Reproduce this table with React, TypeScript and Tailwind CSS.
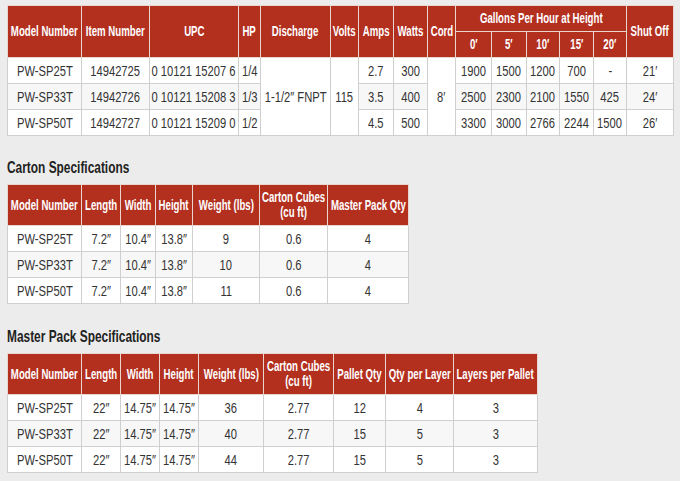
import React from "react";

const RED = "bg-[#b3301f]";
const FONT = { fontFamily: '"Liberation Sans", Arial, sans-serif' };

const thCls = "border border-[#e9d6d1] text-white font-bold text-[14.5px] leading-[15px] text-center align-middle p-0 overflow-visible";
const tdCls = "border border-[#cfcfcf] text-[#333333] text-[14px] leading-[16px] text-center align-middle p-0 whitespace-nowrap overflow-visible";

function H({ children, rowSpan, colSpan }: { children: React.ReactNode; rowSpan?: number; colSpan?: number }) {
  return (
    <th rowSpan={rowSpan} colSpan={colSpan} className={thCls}>
      <div className="flex justify-center">
        <span className="inline-block whitespace-nowrap scale-x-[0.665]">{children}</span>
      </div>
    </th>
  );
}

function D({ children, rowSpan, className = "" }: { children: React.ReactNode; rowSpan?: number; className?: string }) {
  return (
    <td rowSpan={rowSpan} className={`${tdCls} ${className}`}>
      <div className="flex justify-center">
        <span className="inline-block whitespace-nowrap scale-x-[0.8]">{children}</span>
      </div>
    </td>
  );
}

function Title({ children }: { children: React.ReactNode }) {
  return (
    <div className="h-[22px] mb-[5px] text-[17px] leading-[22px] font-bold text-[#222222] whitespace-nowrap" style={FONT}>
      <span className="inline-block origin-left scale-x-[0.7]">{children}</span>
    </div>
  );
}

function Body({ rows }: { rows: string[][] }) {
  return (
    <tbody>
      {rows.map((r, i) => (
        <tr key={i} className={`h-[26px] ${i === 1 ? "bg-[#f7f7f7]" : "bg-white"}`}>
          {r.map((c, j) => (
            <D key={j}>{c}</D>
          ))}
        </tr>
      ))}
    </tbody>
  );
}

function Cols({ widths }: { widths: number[] }) {
  return (
    <colgroup>
      {widths.map((w, i) => (
        <col key={i} style={{ width: w }} />
      ))}
    </colgroup>
  );
}

export default function App() {
  const w1 = [74, 68, 89, 22, 70, 28, 35, 34, 28, 36, 35, 33, 34, 33, 47];
  const w2 = [74, 39, 35, 37, 67, 68, 81];
  const w3 = [74, 39, 39, 39, 65, 70, 52, 68, 84];
  const cubes = (
    <>
      Carton Cubes
      <br />
      (cu ft)
    </>
  );
  return (
    <div className="w-[680px] h-[481px] bg-[#ececec] pl-[7px] pt-[5px]" style={FONT}>
      <table className="table-fixed border-collapse w-[666px]">
        <Cols widths={w1} />
        <thead className={RED}>
          <tr className="h-[26px]">
            <H rowSpan={2}>Model Number</H>
            <H rowSpan={2}>Item Number</H>
            <H rowSpan={2}>UPC</H>
            <H rowSpan={2}>HP</H>
            <H rowSpan={2}>Discharge</H>
            <H rowSpan={2}>Volts</H>
            <H rowSpan={2}>Amps</H>
            <H rowSpan={2}>Watts</H>
            <H rowSpan={2}>Cord</H>
            <H colSpan={5}>Gallons Per Hour at Height</H>
            <H rowSpan={2}>Shut Off</H>
          </tr>
          <tr className="h-[26px]">
            <H>0′</H>
            <H>5′</H>
            <H>10′</H>
            <H>15′</H>
            <H>20′</H>
          </tr>
        </thead>
        <tbody>
          <tr className="h-[26px] bg-white">
            <D>PW-SP25T</D>
            <D>14942725</D>
            <D>0 10121 15207 6</D>
            <D>1/4</D>
            <D rowSpan={3} className="bg-white">1-1/2″ FNPT</D>
            <D rowSpan={3} className="bg-white">115</D>
            <D>2.7</D>
            <D>300</D>
            <D rowSpan={3} className="bg-white">8′</D>
            <D>1900</D>
            <D>1500</D>
            <D>1200</D>
            <D>700</D>
            <D>-</D>
            <D>21′</D>
          </tr>
          <tr className="h-[26px] bg-[#f7f7f7]">
            <D>PW-SP33T</D>
            <D>14942726</D>
            <D>0 10121 15208 3</D>
            <D>1/3</D>
            <D>3.5</D>
            <D>400</D>
            <D>2500</D>
            <D>2300</D>
            <D>2100</D>
            <D>1550</D>
            <D>425</D>
            <D>24′</D>
          </tr>
          <tr className="h-[26px] bg-white">
            <D>PW-SP50T</D>
            <D>14942727</D>
            <D>0 10121 15209 0</D>
            <D>1/2</D>
            <D>4.5</D>
            <D>500</D>
            <D>3300</D>
            <D>3000</D>
            <D>2766</D>
            <D>2244</D>
            <D>1500</D>
            <D>26′</D>
          </tr>
        </tbody>
      </table>

      <div className="mt-[21px]">
        <Title>Carton Specifications</Title>
        <table className="table-fixed border-collapse w-[401px]">
          <Cols widths={w2} />
          <thead className={RED}>
            <tr className="h-[41px]">
              <H>Model Number</H>
              <H>Length</H>
              <H>Width</H>
              <H>Height</H>
              <H>Weight (lbs)</H>
              <H>{cubes}</H>
              <H>Master Pack Qty</H>
            </tr>
          </thead>
          <Body
            rows={[
              ["PW-SP25T", "7.2″", "10.4″", "13.8″", "9", "0.6", "4"],
              ["PW-SP33T", "7.2″", "10.4″", "13.8″", "10", "0.6", "4"],
              ["PW-SP50T", "7.2″", "10.4″", "13.8″", "11", "0.6", "4"],
            ]}
          />
        </table>
      </div>

      <div className="mt-[22px]">
        <Title>Master Pack Specifications</Title>
        <table className="table-fixed border-collapse w-[530px]">
          <Cols widths={w3} />
          <thead className={RED}>
            <tr className="h-[41px]">
              <H>Model Number</H>
              <H>Length</H>
              <H>Width</H>
              <H>Height</H>
              <H>Weight (lbs)</H>
              <H>{cubes}</H>
              <H>Pallet Qty</H>
              <H>Qty per Layer</H>
              <H>Layers per Pallet</H>
            </tr>
          </thead>
          <Body
            rows={[
              ["PW-SP25T", "22″", "14.75″", "14.75″", "36", "2.77", "12", "4", "3"],
              ["PW-SP33T", "22″", "14.75″", "14.75″", "40", "2.77", "15", "5", "3"],
              ["PW-SP50T", "22″", "14.75″", "14.75″", "44", "2.77", "15", "5", "3"],
            ]}
          />
        </table>
      </div>
    </div>
  );
}
